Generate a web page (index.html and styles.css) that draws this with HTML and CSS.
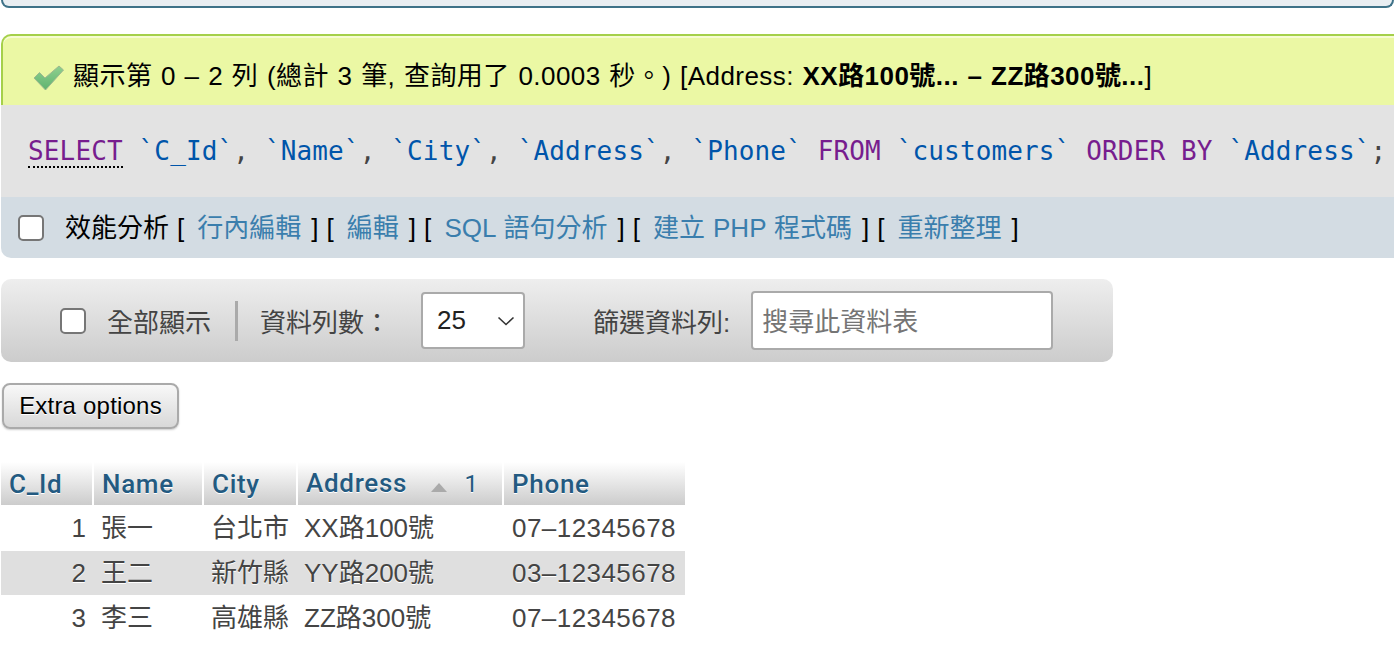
FILE: index.html
```html
<!DOCTYPE html>
<html lang="zh-Hant">
<head>
    <meta charset="UTF-8">
    <title>customers</title>
    <link rel="stylesheet" href="styles.css">
</head>
<body>
    <div class="top-box"></div>

    <div class="success">
        <svg class="check" width="32" height="26" viewBox="0 0 32 26">
            <defs>
                <linearGradient id="check-fill" x1="0" y1="0" x2="0" y2="1">
                    <stop offset="0" stop-color="#8fd08f"/>
                    <stop offset="1" stop-color="#5fb36f"/>
                </linearGradient>
            </defs>
            <path d="M1 13 L6.5 7.5 L12 13 L26 1 L30.5 5 L12.5 25 Z" fill="url(#check-fill)" stroke="#9db88f" stroke-width="1" stroke-linejoin="round"/>
        </svg>
        <span>顯示第 0 – 2 列 (總計 3 筆, 查詢用了 0.0003 秒。) [Address: <b>XX路100號... – ZZ路300號...</b>]</span>
    </div>

    <div class="sql">
        <code><span class="kw first">SELECT</span> <span class="name">`C_Id`</span>, <span class="name">`Name`</span>, <span class="name">`City`</span>, <span class="name">`Address`</span>, <span class="name">`Phone`</span> <span class="kw">FROM</span> <span class="name">`customers`</span> <span class="kw">ORDER BY</span> <span class="name">`Address`</span>;</code>
    </div>

    <div class="links">
        <span class="box"></span>
        <span class="links-text">效能分析 [ <a>行內編輯</a> ] [ <a>編輯</a> ] [ <a>SQL 語句分析</a> ] [ <a>建立 PHP 程式碼</a> ] [ <a>重新整理</a> ]</span>
    </div>

    <div class="toolbar">
        <span class="box"></span>
        <span class="show-all">全部顯示</span>
        <span class="sep"></span>
        <span class="rows-label">資料列數：</span>
        <div class="select">
            <span>25</span>
            <svg width="18" height="10" viewBox="0 0 18 10"><path d="M1.5 1.5 L9 8.5 L16.5 1.5" fill="none" stroke="#333" stroke-width="1.6"/></svg>
        </div>
        <span class="filter-label">篩選資料列:</span>
        <div class="search">搜尋此資料表</div>
    </div>

    <button class="extra">Extra options</button>

    <table class="data">
        <thead>
            <tr>
                <th class="c1">C_Id</th>
                <th class="c2">Name</th>
                <th class="c3">City</th>
                <th class="c4">Address <i class="tri"></i> <small>1</small></th>
                <th class="c5">Phone</th>
            </tr>
        </thead>
        <tbody>
            <tr><td class="num">1</td><td class="cjk">張一</td><td class="cjk">台北市</td><td class="addr">XX路100號</td><td class="phone">07–12345678</td></tr>
            <tr class="odd"><td class="num">2</td><td class="cjk">王二</td><td class="cjk">新竹縣</td><td class="addr">YY路200號</td><td class="phone">03–12345678</td></tr>
            <tr><td class="num">3</td><td class="cjk">李三</td><td class="cjk">高雄縣</td><td class="addr">ZZ路300號</td><td class="phone">07–12345678</td></tr>
        </tbody>
    </table>
</body>
</html>
```

FILE: styles.css
```css
body {
    margin: 0;
    padding: 0 0 0 1px;
    font-family: "Liberation Sans", "Noto Sans CJK TC", sans-serif;
    font-size: 26px;
    color: #000;
    background-color: #fff;
    overflow: hidden;
}

.top-box {
    height: 6px;
    background-color: #e9eef2;
    border: 2px solid #3f7288;
    border-top: none;
    border-radius: 0 0 10px 10px;
}

.success {
    display: flex;
    align-items: center;
    height: 63px;
    margin-top: 26px;
    padding: 6px 0 0 30px;
    background-color: #ebf8a4;
    border: 2px solid #a5d04a;
    border-right: none;
    border-bottom: none;
    border-radius: 10px 0 0 0;
    box-shadow: inset 0 2px 0 #f6fcd2;
    white-space: nowrap;
    letter-spacing: 0.45px;
    word-spacing: 1px;
}

.check {
    flex: none;
    margin-right: 8px;
    margin-top: 9px;
}

.sql {
    height: 92px;
    padding: 31px 0 0 27px;
    box-sizing: border-box;
    background-color: #e3e3e3;
    white-space: nowrap;
}

.sql code {
    font-family: "DejaVu Sans Mono", monospace;
    font-size: 26px;
    letter-spacing: 0.14px;
    color: #444;
}

.kw {
    color: #771d8e;
}

.first {
    border-bottom: 2px dotted #000;
}

.name {
    color: #0055aa;
}

.links {
    display: flex;
    align-items: center;
    height: 61px;
    padding-left: 17px;
    background-color: #d3dce3;
    border-radius: 0 0 0 10px;
    white-space: nowrap;
}

.links a {
    margin: 0 2px 0 5px;
    color: #3a7ead;
}

.box {
    flex: none;
    width: 26px;
    height: 26px;
    box-sizing: border-box;
    background-color: #fff;
    border: 2px solid #767676;
    border-radius: 5px;
}

.links-text {
    margin-left: 21px;
    margin-bottom: 4px;
    word-spacing: 0.8px;
}

.toolbar {
    display: flex;
    align-items: center;
    width: 1112px;
    height: 83px;
    margin-top: 21px;
    padding-left: 59px;
    box-sizing: border-box;
    background: linear-gradient(#eeeeee, #cccccc);
    border-radius: 10px;
    color: #444;
    white-space: nowrap;
}

.show-all {
    margin-left: 21px;
}

.sep {
    width: 3px;
    height: 40px;
    margin: 0 22px 0 24px;
    background-color: #aaa;
}

.select {
    display: flex;
    align-items: center;
    justify-content: space-between;
    width: 104px;
    height: 57px;
    margin-left: 31px;
    padding: 0 8px 0 14px;
    box-sizing: border-box;
    background-color: #fff;
    border: 2px solid #aaa;
    border-radius: 4px;
    color: #222;
}

.filter-label {
    margin-left: 68px;
}

.search {
    width: 302px;
    height: 59px;
    margin-left: 21px;
    padding-left: 9px;
    box-sizing: border-box;
    line-height: 58px;
    background-color: #fff;
    border: 2px solid #aaa;
    border-radius: 4px;
    color: #757575;
}

.extra {
    display: block;
    width: 177px;
    height: 46px;
    margin: 21px 0 0 1px;
    padding: 0;
    font-family: inherit;
    font-size: 24px;
    letter-spacing: 0.2px;
    color: #000;
    background: linear-gradient(#f8f8f8, #d8d8d8);
    border: 2px solid #aaa;
    border-radius: 8px;
    box-shadow: 0 1px 2px #ccc;
    text-shadow: 0 1px 0 #fff;
}

.data {
    margin-top: 33px;
    border-collapse: separate;
    border-spacing: 0;
    color: #444;
    line-height: 30px;
}

.data th {
    height: 43px;
    padding: 0 8px;
    box-sizing: border-box;
    text-align: left;
    font-family: Roboto, "Liberation Sans", sans-serif;
    font-weight: 500;
    letter-spacing: 0.7px;
    color: #235a81;
    background: linear-gradient(#ffffff, #cccccc);
    border-right: 2px solid #fff;
    text-shadow: 0 1px 0 #fff;
    white-space: nowrap;
}

.data th:last-child {
    border-right: none;
}

.c1 { width: 93px; }
.c2 { width: 110px; }
.c3 { width: 94px; }
.c4 { width: 206px; }
.c5 { width: 181px; }

.data td {
    height: 45px;
    padding: 0 8px;
    box-sizing: border-box;
    white-space: nowrap;
    text-shadow: 0 1px 0 #fff;
}

.data tbody tr:first-child td {
    height: 46px;
}

.data .num {
    text-align: right;
}

.data .cjk {
    padding-left: 7px;
}

.data .addr {
    padding-left: 6px;
}

.data .phone {
    letter-spacing: 0.45px;
}

.data .odd td {
    height: 44px;
    background-color: #dfdfdf;
}

.tri {
    display: inline-block;
    width: 0;
    height: 0;
    margin: 0 10px 0 17px;
    border-left: 8px solid transparent;
    border-right: 8px solid transparent;
    border-bottom: 9px solid #aaa;
}

.data small {
    font-size: 24px;
    font-weight: 400;
    letter-spacing: 0;
}
```
